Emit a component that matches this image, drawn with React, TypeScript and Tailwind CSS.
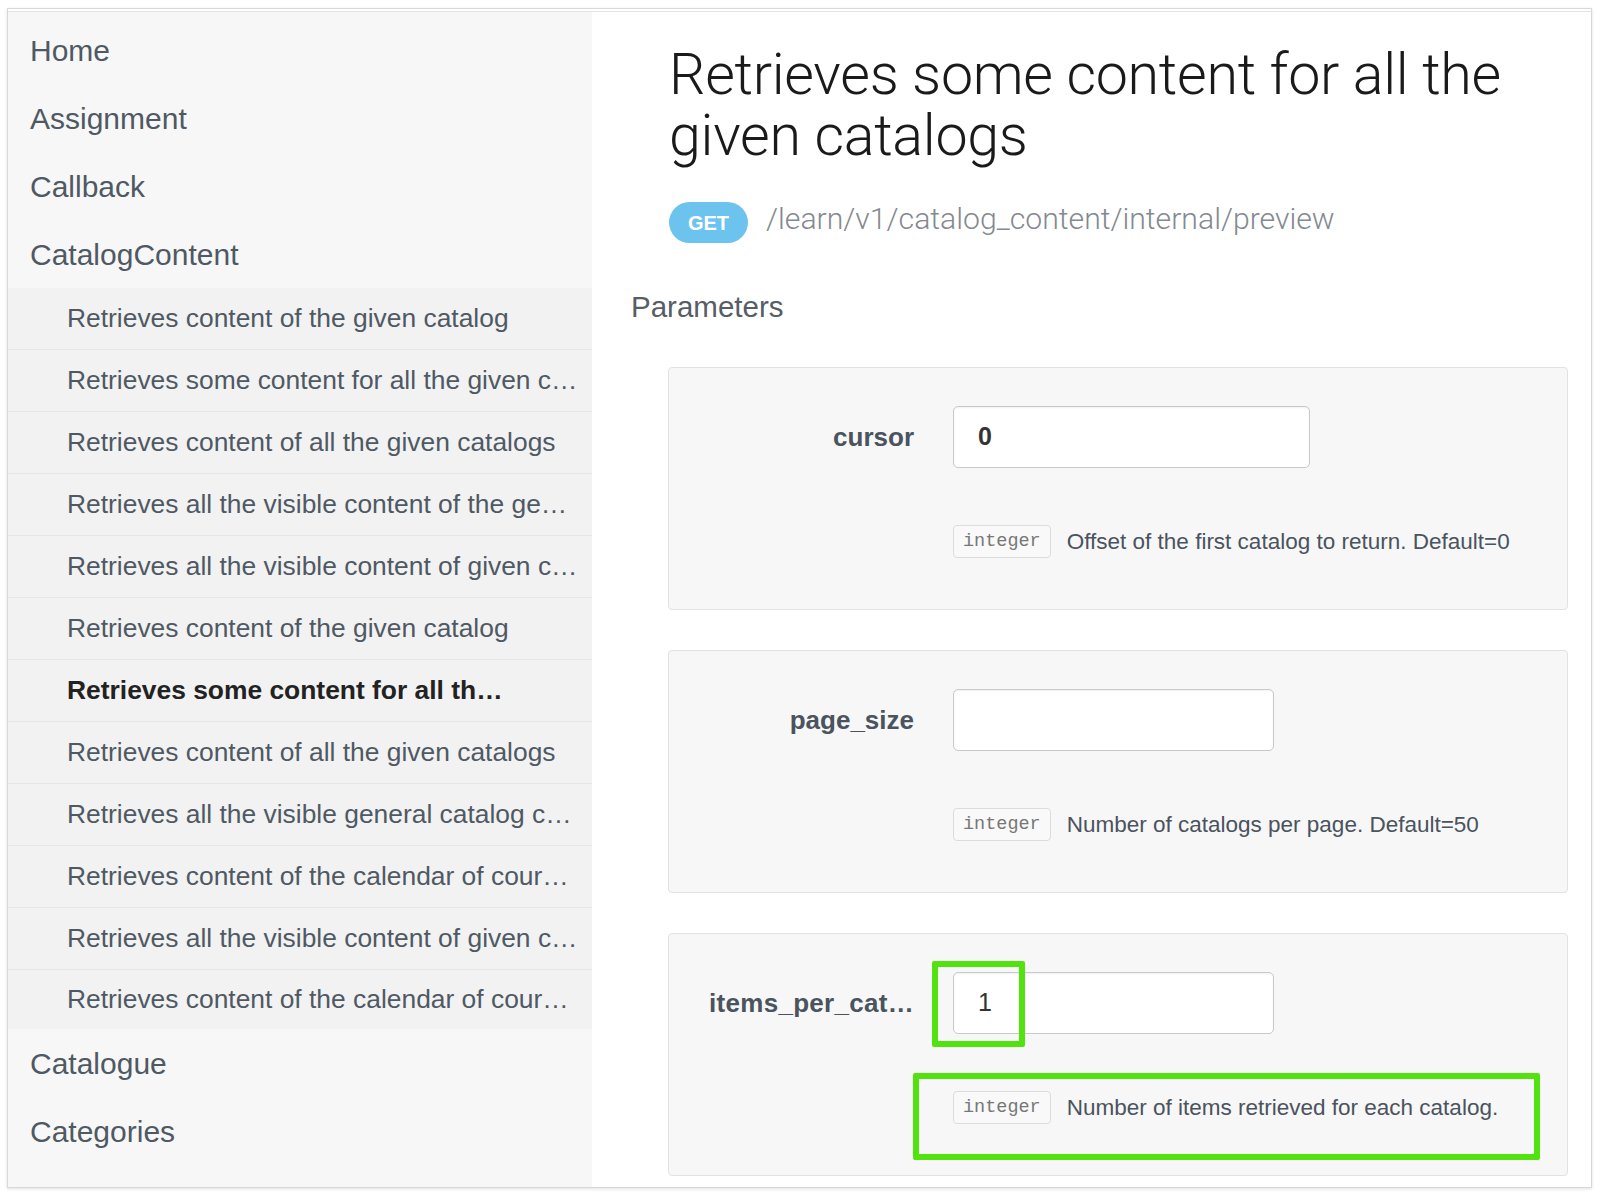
import React from "react";

const sans = { fontFamily: '"Liberation Sans", Arial, sans-serif' };

const subItems: { text: string; active?: boolean }[] = [
  { text: "Retrieves content of the given catalog" },
  { text: "Retrieves some content for all the given c…" },
  { text: "Retrieves content of all the given catalogs" },
  { text: "Retrieves all the visible content of the ge…" },
  { text: "Retrieves all the visible content of given c…" },
  { text: "Retrieves content of the given catalog" },
  { text: "Retrieves some content for all th…", active: true },
  { text: "Retrieves content of all the given catalogs" },
  { text: "Retrieves all the visible general catalog c…" },
  { text: "Retrieves content of the calendar of cour…" },
  { text: "Retrieves all the visible content of given c…" },
  { text: "Retrieves content of the calendar of cour…" },
];

function TopItem({ label }: { label: string }) {
  return (
    <div className="h-[68px] flex items-center pl-[22px] text-[30px] text-[#4f5964] whitespace-nowrap">
      {label}
    </div>
  );
}

function ParamCard({
  name,
  nameClass,
  value,
  valueBold,
  inputWidth,
  desc,
  children,
}: {
  name: string;
  nameClass?: string;
  value: string;
  valueBold?: boolean;
  inputWidth: string;
  desc: string;
  children?: React.ReactNode;
}) {
  return (
    <div className="relative h-[243px] bg-[#f7f7f7] border border-[#e2e2e2] rounded-[4px] pt-[38px] pl-[40px]">
      <div className="flex items-center h-[62px]">
        <div className="w-[205px] text-right text-[26px] font-bold text-[#4a535e] whitespace-nowrap overflow-visible">
          <span className={nameClass}>{name}</span>
        </div>
        <div
          className={`ml-[39px] h-[62px] ${inputWidth} bg-white border border-[#c9c9c9] rounded-[5px] shadow-[inset_0_1px_2px_rgba(0,0,0,0.06)] flex items-center pl-[24px] text-[25px] text-[#333] ${
            valueBold ? "font-bold" : ""
          }`}
        >
          {value}
        </div>
      </div>
      <div className="mt-[57px] ml-[244px] flex items-center">
        <span
          className="h-[33px] px-[9px] flex items-center border border-[#dcdcdc] rounded-[4px] bg-[#f9f9f9] text-[18.5px] text-[#777]"
          style={{ fontFamily: '"Liberation Mono", "DejaVu Sans Mono", monospace' }}
        >
          integer
        </span>
        <span className="ml-[16px] text-[22.5px] text-[#4a535e] whitespace-nowrap">{desc}</span>
      </div>
      {children}
    </div>
  );
}

export default function App() {
  return (
    <div className="w-[1600px] h-[1196px] bg-white overflow-hidden pt-[8px] pl-[7px]" style={sans}>
      <div className="w-[1585px] h-[1180px] border border-[#d8d8d8] shadow-[0_1px_3px_rgba(0,0,0,0.12)] flex flex-col overflow-hidden bg-white">
        <div className="h-[3px] border-b border-[#e3e3e3] bg-white shrink-0" />
        <div className="flex flex-1 min-h-0">
          {/* Sidebar */}
          <div className="w-[584px] shrink-0 bg-[#f7f7f7] pt-[4px] overflow-hidden">
            <TopItem label="Home" />
            <TopItem label="Assignment" />
            <TopItem label="Callback" />
            <TopItem label="CatalogContent" />
            <div className="bg-[#f2f2f2]">
              {subItems.map((it, i) => {
                const last = i === subItems.length - 1;
                return (
                  <div
                    key={i}
                    className={`flex items-center pl-[59px] pr-[8px] text-[26.4px] whitespace-nowrap overflow-hidden ${
                      last ? "h-[59px]" : "h-[62px] border-b border-[#e6e6e6]"
                    } ${it.active ? "font-bold text-[#222]" : "text-[#4f5964]"}`}
                  >
                    {it.text}
                  </div>
                );
              })}
            </div>
            <TopItem label="Catalogue" />
            <TopItem label="Categories" />
            <TopItem label="Courses" />
          </div>

          {/* Main */}
          <div className="flex-1 min-w-0 bg-white pl-[39px] pr-[23px] pt-[32px] overflow-hidden">
            <div className="ml-[38px]">
              <h1
                className="text-[57.4px] leading-[61px] font-light text-[#1a1a1a] tracking-[-0.3px]"
                style={{ fontFamily: 'Roboto, "Liberation Sans", sans-serif' }}
              >
                Retrieves some content for all the
                <br />
                given catalogs
              </h1>
              <div className="mt-[36px] flex items-center h-[41px]">
                <span className="w-[79px] h-[41px] rounded-full bg-[#6cc4ee] text-white font-bold text-[20px] flex items-center justify-center">
                  GET
                </span>
                <span
                  className="ml-[18px] pb-[7px] text-[30.2px] font-light text-[#84898f]"
                  style={{ fontFamily: 'Roboto, "Liberation Sans", sans-serif' }}
                >
                  /learn/v1/catalog_content/internal/preview
                </span>
              </div>
            </div>
            <div className="mt-[47px] text-[29.5px] leading-[34px] text-[#575d64]">Parameters</div>
            <div className="mt-[43px] ml-[37px] flex flex-col gap-[40px]">
              <ParamCard
                name="cursor"
                value="0"
                valueBold
                inputWidth="w-[357px]"
                desc="Offset of the first catalog to return. Default=0"
              />
              <ParamCard
                name="page_size"
                value=""
                inputWidth="w-[321px]"
                desc="Number of catalogs per page. Default=50"
              />
              <ParamCard
                name="items_per_cat…"
                nameClass="inline-block mr-[4px] tracking-[0.3px]"
                value="1"
                inputWidth="w-[321px]"
                desc="Number of items retrieved for each catalog."
              >
                <div className="absolute left-[263px] top-[27px] w-[93px] h-[86px] border-[6px] border-[#52e20e] rounded-[2px]" />
                <div className="absolute left-[244px] top-[139px] w-[627px] h-[87px] border-[6px] border-[#52e20e] rounded-[2px]" />
              </ParamCard>
            </div>
          </div>
        </div>
      </div>
    </div>
  );
}
